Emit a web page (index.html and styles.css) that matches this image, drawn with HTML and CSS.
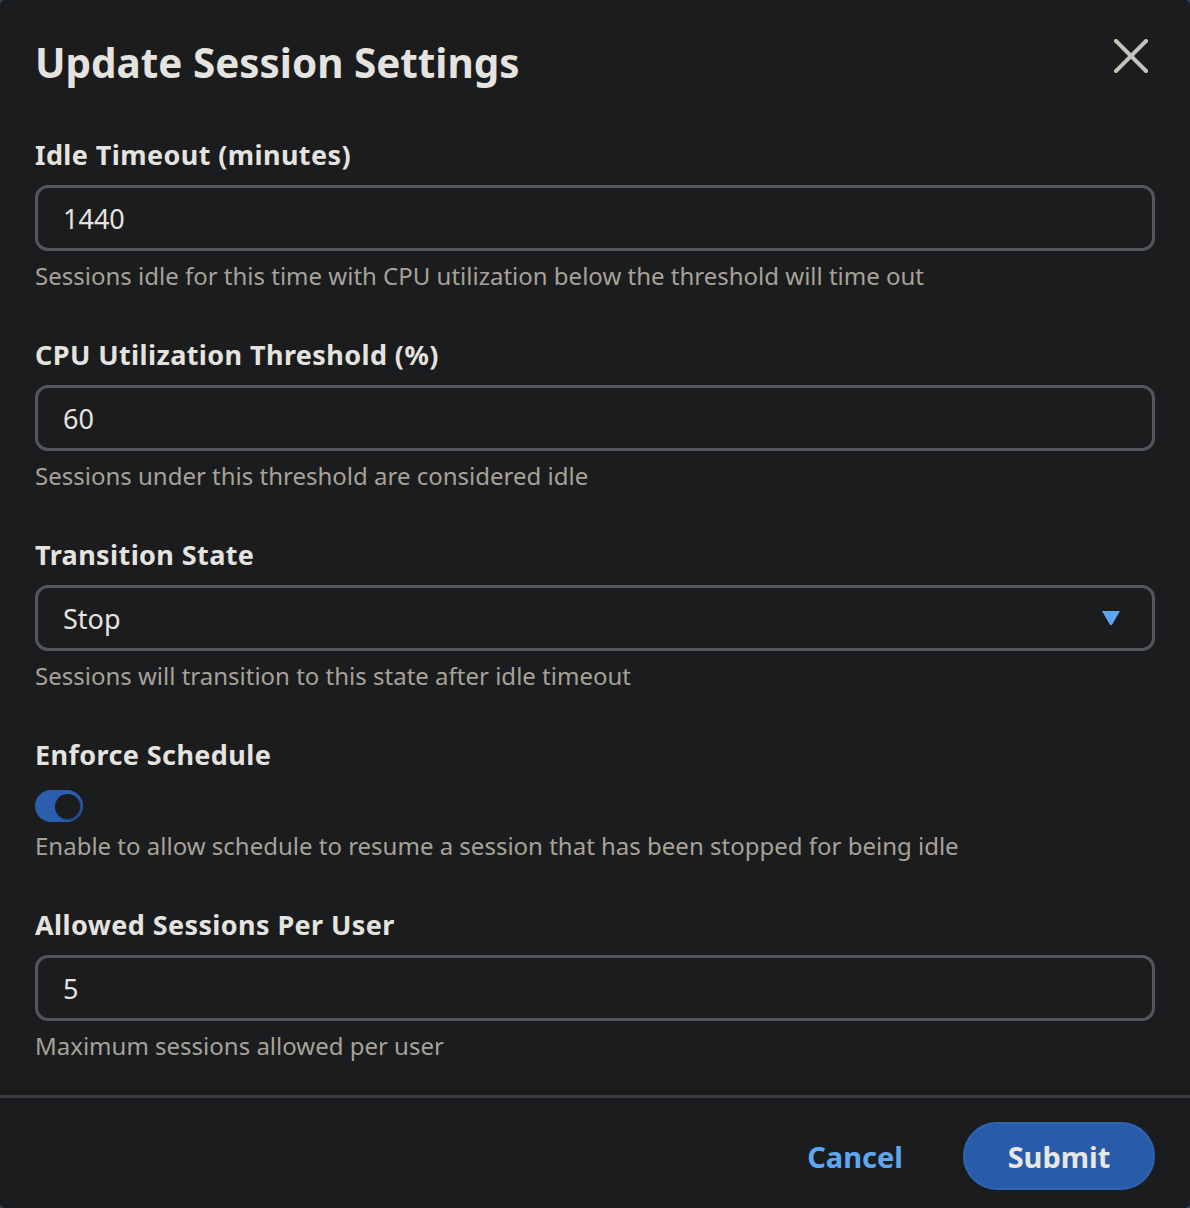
FILE: index.html
```html
<!DOCTYPE html>
<html lang="en">
<head>
<meta charset="utf-8">
<title>Update Session Settings</title>
<link rel="stylesheet" href="styles.css">
</head>
<body>
<div class="dialog">
  <div class="dialog-body">
    <div class="dialog-header">
      <h1 class="dialog-title">Update Session Settings</h1>
      <button class="close-btn" aria-label="Close">
        <svg viewBox="0 0 34 34" width="34" height="34"><path d="M2 2 L32 32 M32 2 L2 32" stroke="#c6c1b9" stroke-width="4" stroke-linecap="square" fill="none"/></svg>
      </button>
    </div>

    <div class="field">
      <label class="field-label">Idle Timeout (minutes)</label>
      <div class="input">1440</div>
      <div class="helper">Sessions idle for this time with CPU utilization below the threshold will time out</div>
    </div>

    <div class="field">
      <label class="field-label">CPU Utilization Threshold (%)</label>
      <div class="input">60</div>
      <div class="helper">Sessions under this threshold are considered idle</div>
    </div>

    <div class="field">
      <label class="field-label">Transition State</label>
      <div class="input select">
        <span>Stop</span>
        <svg class="caret" viewBox="0 0 20 16" width="20" height="16"><path d="M1 1 H19 L11.2 14.5 Q10 16 8.8 14.5 Z" fill="#5ea6f2"/></svg>
      </div>
      <div class="helper">Sessions will transition to this state after idle timeout</div>
    </div>

    <div class="field">
      <label class="field-label">Enforce Schedule</label>
      <div class="toggle"><span class="knob"></span></div>
      <div class="helper helper-toggle">Enable to allow schedule to resume a session that has been stopped for being idle</div>
    </div>

    <div class="field field-last">
      <label class="field-label">Allowed Sessions Per User</label>
      <div class="input">5</div>
      <div class="helper">Maximum sessions allowed per user</div>
    </div>
  </div>

  <div class="dialog-footer">
    <button class="btn-cancel">Cancel</button>
    <button class="btn-submit">Submit</button>
  </div>
</div>
</body>
</html>
```

FILE: styles.css
```css
* { box-sizing: border-box; }

html, body {
  margin: 0;
  padding: 0;
  height: 100%;
}

body {
  background: #34445a;
  font-family: "Noto Sans", "Open Sans", sans-serif;
}

.dialog {
  width: 1190px;
  height: 1208px;
  background: #1b1c1e;
  border-radius: 5px;
  display: flex;
  flex-direction: column;
  overflow: hidden;
}

.dialog-body {
  flex: 1;
  padding: 36px 35px 0 35px;
}

.dialog-header {
  display: flex;
  justify-content: space-between;
  align-items: flex-start;
  margin-bottom: 47px;
}

.dialog-title {
  margin: 0;
  font-size: 40.4px;
  line-height: 54px;
  font-weight: 700;
  color: #e5e3df;
}

.close-btn {
  background: none;
  border: none;
  padding: 0;
  margin: 3px 7px 0 0;
  width: 34px;
  height: 34px;
  cursor: pointer;
}

.close-btn svg { display: block; }

.field {
  display: flex;
  flex-direction: column;
  margin-bottom: 45px;
}

.field-last { margin-bottom: 0; }

.field-label {
  font-size: 27px;
  line-height: 36px;
  font-weight: 700;
  letter-spacing: 0.4px;
  color: #e5e3df;
  margin-bottom: 12px;
}

.input {
  height: 66px;
  border: 3px solid #53575c;
  border-radius: 13px;
  padding: 0 25px;
  display: flex;
  align-items: center;
  font-size: 27px;
  color: #e5e3df;
}

.select {
  justify-content: space-between;
  padding-right: 31px;
}

.caret { display: block; }

.helper {
  margin-top: 9px;
  font-size: 24px;
  line-height: 32px;
  color: #a7a298;
}

.helper-toggle { margin-top: 8px; }

.toggle {
  margin-top: 5px;
  width: 48px;
  height: 32px;
  border-radius: 16px;
  background: #2b5fae;
  display: flex;
  align-items: center;
  justify-content: flex-end;
  padding-right: 3px;
}

.knob {
  width: 25px;
  height: 25px;
  border-radius: 50%;
  background: #1b1c1e;
  box-shadow: 1px 1px 0 1px #1f4a8c;
}

.dialog-footer {
  height: 113px;
  flex-shrink: 0;
  border-top: 3px solid #3a3b3e;
  display: flex;
  justify-content: flex-end;
  align-items: center;
  gap: 36px;
  padding: 6px 35px 0 35px;
}

.btn-cancel {
  background: none;
  border: none;
  padding: 0 24px;
  font-family: inherit;
  font-size: 29px;
  font-weight: 700;
  color: #5ea6f2;
  height: 68px;
  cursor: pointer;
}

.btn-submit {
  width: 192px;
  height: 68px;
  border-radius: 34px;
  background: #285ca8;
  border: 2px solid #2f65b3;
  font-family: inherit;
  font-size: 29px;
  font-weight: 700;
  color: #e8e6e2;
  cursor: pointer;
}
```
